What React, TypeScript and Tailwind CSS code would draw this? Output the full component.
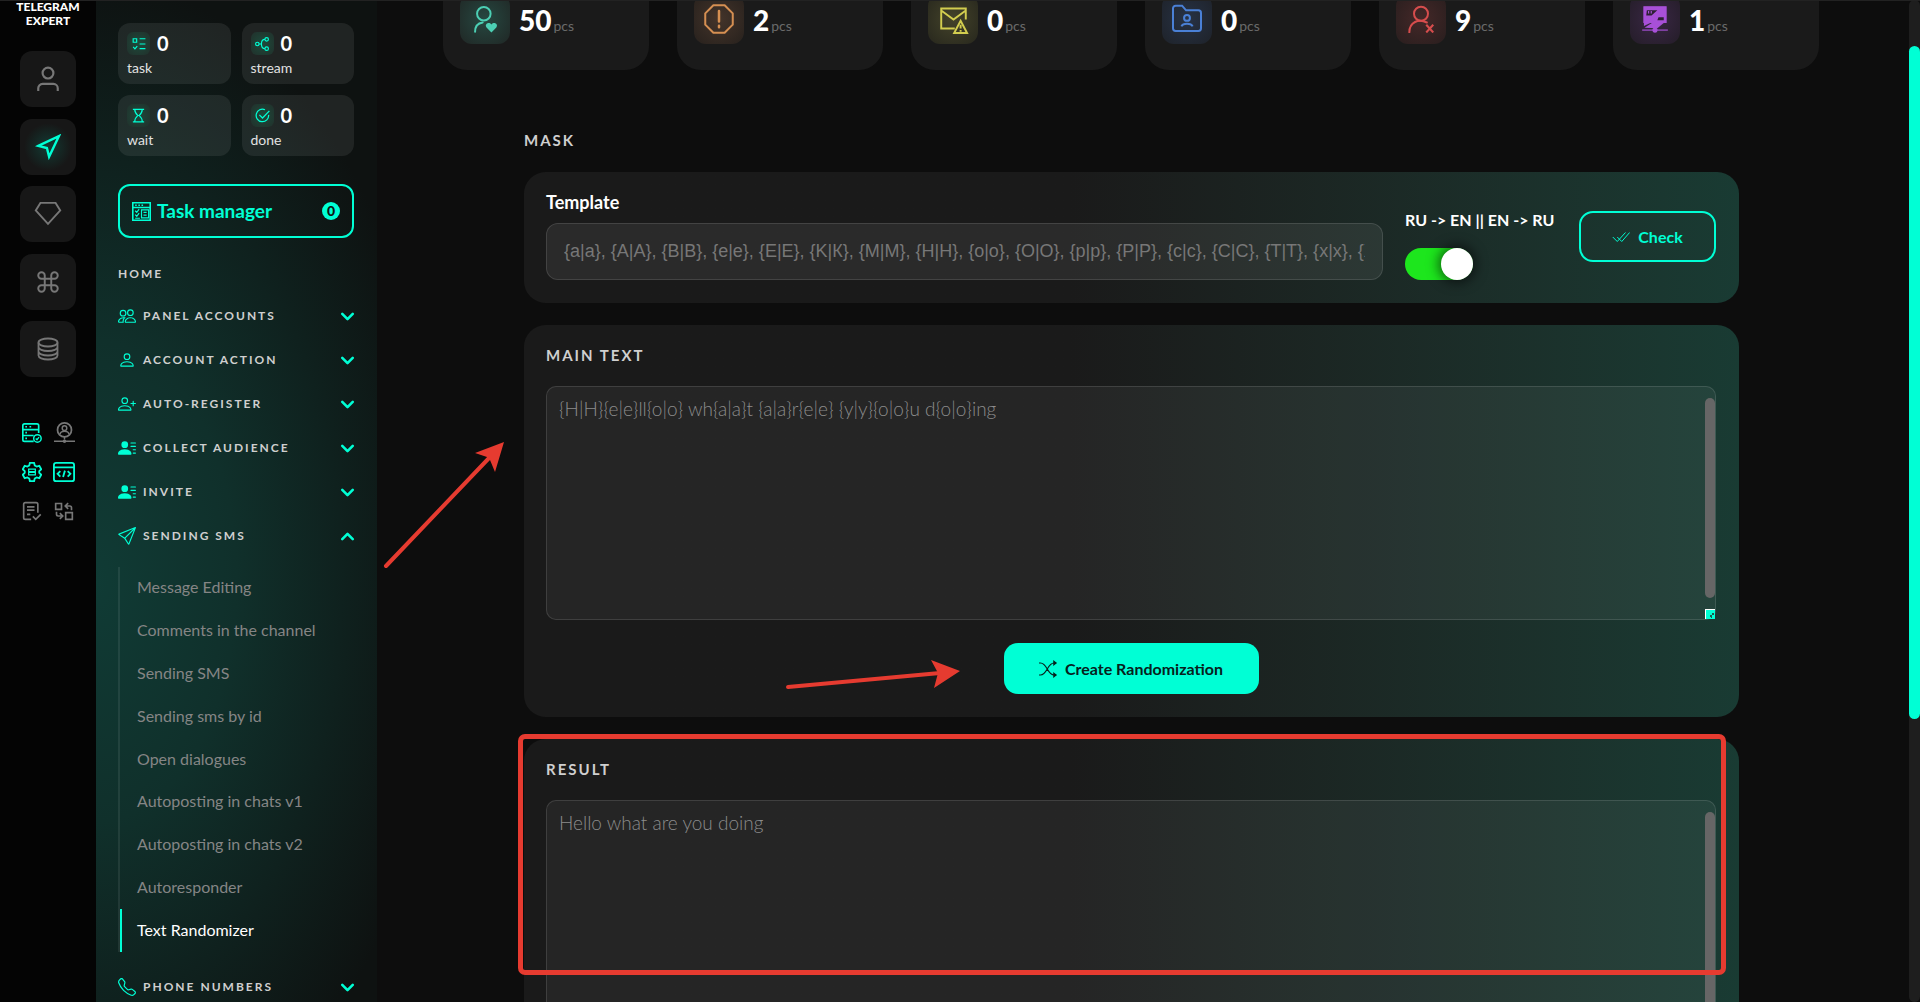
import type { ReactNode } from 'react';
import {
  BsPeople,
  BsPerson,
  BsPersonPlus,
  BsPersonLinesFill,
  BsSend,
  BsTelephone,
} from 'react-icons/bs';
import { ChevronDown, ChevronUp, Command, Navigation } from 'lucide-react';

const TEMPLATE =
  '{a|а}, {A|А}, {B|В}, {e|е}, {E|Е}, {K|К}, {M|М}, {H|Н}, {o|о}, {O|О}, {p|р}, {P|Р}, {c|с}, {C|С}, {T|Т}, {x|х}, {X|Х}, {y|у}';

function Svg({ size = 18, children }: { size?: number; children: ReactNode }) {
  return (
    <svg
      width={size}
      height={size}
      viewBox="0 0 24 24"
      fill="none"
      stroke="currentColor"
      strokeWidth={2}
      aria-hidden="true"
      className="shrink-0"
    >
      {children}
    </svg>
  );
}

const stats = [
  {
    value: 50,
    tile: 'bg-[radial-gradient(circle,#264841,#202725)] text-[#4ccfb4]',
    icon: (
      <Svg size={28}>
        <ellipse cx={11} cy={7.500} rx={5.800} ry={5.800} strokeWidth={1.700} />
        <path d="M3.500 23c0-5 3-7.500 6.500-8" strokeWidth={1.700} strokeLinecap="round" />
        <path
          d="M17.500 23.500l-4.200-4.300c-2-2.500 1.700-5.400 4.200-2.500 2.500-2.900 6.200 0 4.200 2.500z"
          fill="currentColor"
          stroke="none"
        />
      </Svg>
    ),
  },
  {
    value: 2,
    tile: 'bg-[radial-gradient(circle,#44342a,#27211d)] text-[#d58f52]',
    icon: (
      <Svg size={30}>
        <path d="M7.500 1h9L23 7.500v9L16.500 23h-9L1 16.500v-9z" strokeWidth={1.600} strokeLinejoin="round" />
        <path d="M12 5.500v8.500M12 17.300v1.200" strokeWidth={2} strokeLinecap="round" />
      </Svg>
    ),
  },
  {
    value: 0,
    tile: 'bg-[radial-gradient(circle,#44432a,#27271d)] text-[#d2cd4f]',
    icon: (
      <Svg size={31}>
        <path d="M13 19H2.500V3.500h19V12M2.500 5l9.500 7 9.500-7" strokeWidth={1.500} />
        <path d="M17.500 13l5 9.500h-10z" strokeWidth={1.500} />
        <path d="M17.500 16v3M17.500 20.200v1.300" strokeWidth={1.500} />
      </Svg>
    ),
  },
  {
    value: 0,
    tile: 'bg-[radial-gradient(circle,#273245,#1e2229)] text-[#4a80d6]',
    icon: (
      <Svg size={32}>
        <path
          d="M1.500 4a2 2 0 0 1 2-2h4.800L11.300 5.500H20.500a2 2 0 0 1 2 2V19a2 2 0 0 1-2 2H3.500a2 2 0 0 1-2-2z"
          strokeWidth={1.500}
        />
        <circle cx={12} cy={11.200} r={2.200} strokeWidth={1.500} />
        <path d="M7.800 17.500c1.200-2.600 7.200-2.600 8.400 0" strokeWidth={1.500} />
      </Svg>
    ),
  },
  {
    value: 9,
    tile: 'bg-[radial-gradient(circle,#452828,#281e1e)] text-[#d64d4d]',
    icon: (
      <Svg size={28}>
        <circle cx={12} cy={7.500} r={6} strokeWidth={1.700} />
        <path d="M2 23.500c0-9 8-12 15-8.500" strokeWidth={1.700} strokeLinecap="round" />
        <path d="M16.500 17l6 6.500M22.500 17l-6 6.500" strokeWidth={1.800} />
      </Svg>
    ),
  },
  {
    value: 1,
    tile: 'bg-[radial-gradient(circle,#3a2745,#241d28)] text-[#a850d8]',
    icon: (
      <Svg size={28}>
        <path d="M2.500 1.500h19V15H2.500z" fill="currentColor" strokeWidth={1} />
        <path d="M5 4.500h9l-5 4.500H4.500z M15 10.500h4.500v2.500H14z" fill="#2d2034" stroke="none" />
        <path d="M6.500 5.200v2M8.800 5.200v2" strokeWidth={1} />
        <path d="M2.500 14v4L12 13.500" fill="currentColor" stroke="none" />
        <path d="M3 19.500L10 15h10l-6 5z" fill="currentColor" stroke="none" />
        <path d="M1 21.500h22" strokeWidth={1} />
        <circle cx={12} cy={21.500} r={2.200} fill="currentColor" stroke="none" />
      </Svg>
    ),
  },
];

const counters = [
  {
    label: 'task',
    icon: (
      <Svg size={14}>
        <path d="M2 3h6v6H2zM13 3h10M13 12h10M13 20h10M2 17l3 3.500 4-5" />
      </Svg>
    ),
  },
  {
    label: 'stream',
    icon: (
      <Svg size={14}>
        <circle cx={4} cy={12} r={3} />
        <circle cx={20} cy={4} r={3} />
        <circle cx={20} cy={20} r={3} />
        <path d="M7 12h4M17 4c-5 0-6 3-6 8s1 8 6 8" />
      </Svg>
    ),
  },
  {
    label: 'wait',
    icon: (
      <Svg size={15}>
        <path d="M3 2h18M3 22h18M6 2c0 6 2 7.500 5 10-3 2.500-5 4-5 10M18 2c0 6-2 7.500-5 10 3 2.500 5 4 5 10" />
      </Svg>
    ),
  },
  {
    label: 'done',
    icon: (
      <Svg size={15}>
        <path d="M16 2.800A10 10 0 1 0 21.800 11M7 11l5 5L23 4.500" />
      </Svg>
    ),
  },
];

const railButtons = [
  {
    label: 'Account',
    active: false,
    icon: (
      <Svg size={26}>
        <circle cx={12} cy={6.500} r={5} />
        <path d="M3 23v-2.500a4 4 0 0 1 4-4h10a4 4 0 0 1 4 4V23" />
      </Svg>
    ),
  },
  { label: 'Telegram', active: true, icon: <Navigation size={26} strokeWidth={2.2} strokeLinejoin="miter" /> },
  {
    label: 'Premium',
    active: false,
    icon: (
      <Svg size={28}>
        <path d="M5.500 2.500h13L22.500 9 12 20.500 1.500 9z" strokeWidth={1.600} />
      </Svg>
    ),
  },
  { label: 'Commands', active: false, icon: <Command size={26} strokeWidth={1.8} /> },
  {
    label: 'Database',
    active: false,
    icon: (
      <Svg size={24}>
        <ellipse cx={12} cy={5.500} rx={9.500} ry={4} strokeWidth={1.800} />
        <path
          d="M2.500 5.500v13c0 2.200 4.200 4 9.500 4s9.500-1.800 9.500-4v-13M2.500 10c0 2.200 4.200 4 9.500 4s9.500-1.800 9.500-4M2.500 14.500c0 2.200 4.200 4 9.500 4s9.500-1.800 9.500-4"
          strokeWidth={1.800}
        />
      </Svg>
    ),
  },
];

const tools = [
  {
    label: 'Servers',
    on: true,
    icon: (
      <Svg size={20}>
        <path d="M14 22H3a2 2 0 0 1-2-2V3a2 2 0 0 1 2-2h15a2 2 0 0 1 2 2v9M1 8h19M1 15h13M4 4.500h2M9 4.500h2M4 11.500h2M4 18.500h2" />
        <circle cx={18.500} cy={18.500} r={4.500} strokeWidth={1.800} />
        <path d="M16.500 18.500l1.500 1.500 2.500-3" strokeWidth={1.600} />
      </Svg>
    ),
  },
  {
    label: 'Proxy',
    on: false,
    icon: (
      <Svg size={21}>
        <circle cx={12} cy={9} r={8} />
        <circle cx={12} cy={7} r={2.600} strokeWidth={1.700} />
        <path d="M7 14c.5-4.500 9.500-4.500 10 0M12 17v3M0 22h24" strokeWidth={1.700} />
        <circle cx={12} cy={22} r={2} fill="currentColor" stroke="none" />
      </Svg>
    ),
  },
  {
    label: 'Settings',
    on: true,
    icon: (
      <Svg size={20}>
        <path
          d="M9.500 1h5l.8 3.200 2.200 1.300 3.200-1 2.400 4.200-2.400 2.300v2l2.400 2.300-2.400 4.200-3.200-1-2.200 1.300-.8 3.200h-5l-.8-3.200-2.200-1.300-3.200 1-2.400-4.200 2.400-2.300v-2L.9 8.700l2.400-4.200 3.200 1 2.200-1.300z"
          strokeLinejoin="round"
          strokeWidth={2.200}
        />
        <path d="M8 8.500h8v3H8zM8 12.500h8v3H8z" strokeWidth={1.500} />
      </Svg>
    ),
  },
  {
    label: 'Code',
    on: true,
    icon: (
      <Svg size={22}>
        <rect x={1} y={2} width={22} height={20} rx={2.500} />
        <path d="M1 7h22M8 11l-3 3 3 3M16 11l3 3-3 3M13 10.500L11 17.500" />
      </Svg>
    ),
  },
  {
    label: 'Logs',
    on: false,
    icon: (
      <Svg size={20}>
        <path d="M11 22H4a2 2 0 0 1-2-2V4a2 2 0 0 1 2-2h13a2 2 0 0 1 2 2v10M6 7h9M6 11h9M6 16h4M13 18.500l3.500 3.500 6-6" />
      </Svg>
    ),
  },
  {
    label: 'Convert',
    on: false,
    icon: (
      <Svg size={20}>
        <path d="M2 3h7v7H2zM14 14h8v8h-8zM14 6h5a2 2 0 0 1 2 2v3M17 2.500L13.500 6 17 9.500M3 13v3a2 2 0 0 0 2 2h4M7 14.500l3.500 3.500L7 21.500" />
      </Svg>
    ),
  },
];

const menu = [
  { label: 'PANEL ACCOUNTS', icon: <BsPeople size={18} /> },
  { label: 'ACCOUNT ACTION', icon: <BsPerson size={18} /> },
  { label: 'AUTO-REGISTER', icon: <BsPersonPlus size={18} /> },
  { label: 'COLLECT AUDIENCE', icon: <BsPersonLinesFill size={18} /> },
  { label: 'INVITE', icon: <BsPersonLinesFill size={18} /> },
  { label: 'SENDING SMS', icon: <BsSend size={18} />, open: true },
];

const submenu = [
  'Message Editing',
  'Comments in the channel',
  'Sending SMS',
  'Sending sms by id',
  'Open dialogues',
  'Autoposting in chats v1',
  'Autoposting in chats v2',
  'Autoresponder',
  'Text Randomizer',
];

function Rail() {
  return (
    <nav className="flex w-24 shrink-0 flex-col items-center bg-[#040404]">
      <p className="text-center text-xs leading-[14px] font-black text-white">
        TELEGRAM
        <br />
        EXPERT
      </p>
      <div className="mt-[23px] flex h-[326px] shrink-0 flex-col justify-between">
        {railButtons.map((item) => (
          <button
            key={item.label}
            type="button"
            aria-label={item.label}
            className={
              item.active
                ? 'flex size-14 items-center justify-center rounded-xl bg-[radial-gradient(circle,#123a33,#171717_60%)] text-[#00ffd5]'
                : 'flex size-14 items-center justify-center rounded-xl bg-[#171717] text-[#777]'
            }
          >
            {item.icon}
          </button>
        ))}
      </div>
      <div className="mt-9 grid grid-cols-2">
        {tools.map((tool) => (
          <button
            key={tool.label}
            type="button"
            aria-label={tool.label}
            className={
              tool.on
                ? 'flex h-[39px] w-8 items-center justify-center text-[#00ffd5]'
                : 'flex h-[39px] w-8 items-center justify-center text-[#777]'
            }
          >
            {tool.icon}
          </button>
        ))}
      </div>
    </nav>
  );
}

function MenuButton({ label, icon, open }: { label: string; icon: ReactNode; open?: boolean }) {
  const Chevron = open ? ChevronUp : ChevronDown;

  return (
    <button
      type="button"
      className="flex h-11 w-full shrink-0 items-center text-left text-xs font-bold tracking-[2px] text-[#cfcfcf]"
    >
      <span className="mr-[7px] text-[#00ffd5]">{icon}</span>
      <span className="flex-1">{label}</span>
      <Chevron size={21} strokeWidth={3} className="-mr-1 text-[#00ffd5]" />
    </button>
  );
}

function Sidebar() {
  return (
    <aside className="flex w-[281px] shrink-0 flex-col bg-[#0e1211] bg-[radial-gradient(ellipse_125%_60%_at_0%_58%,#103b35_0%,#10302b_40%,#0e1211_100%)] pt-[23px] pr-[23px] pl-[22px]">
      <div className="grid grid-cols-2 gap-[11px]">
        {counters.map((counter) => (
          <div key={counter.label} className="h-[61px] rounded-xl bg-white/8 px-[9px] pt-[9px]">
            <div className="flex items-center gap-[7px]">
              <span className="flex size-[23px] items-center justify-center rounded-md bg-[radial-gradient(circle,#1d4a3b,#21302b)] text-[#00ffd5]">
                {counter.icon}
              </span>
              <span className="text-xl leading-[23px] font-bold text-white">0</span>
            </div>
            <p className="mt-[3px] text-sm leading-5 text-[#e2e2e2]">{counter.label}</p>
          </div>
        ))}
      </div>

      <button
        type="button"
        className="mt-7 flex h-[54px] shrink-0 items-center rounded-xl border-2 border-[#00ffd5] px-3 text-[19px] font-bold text-[#00ffd5]"
      >
        <Svg size={19}>
          <path d="M1 1h22v22H1zM1 7h22M4 4h2M8 4h2M12 4h2" />
          <path d="M4 11l2 2 3-4M4 16l2 2 3-4M12 10h9v10h-9zM14.500 13h4M14.500 16.500h4M4 20.500h6" strokeWidth={1.500} />
        </Svg>
        <span className="ml-1.5 flex-1 text-left">Task manager</span>
        <span className="flex size-[18px] items-center justify-center rounded-full bg-[#00ffd5] text-sm font-black text-[#0e1513]">
          0
        </span>
      </button>

      <h2 className="mt-[26px] text-xs leading-5 font-bold tracking-[2px] text-[#cfcfcf]">HOME</h2>
      <div className="mt-[10px] flex flex-col">
        {menu.map((item) => (
          <MenuButton key={item.label} {...item} />
        ))}
      </div>

      <ul className="mt-[9px] flex h-[385px] shrink-0 flex-col border-l-2 border-white/8">
        {submenu.map((item) => (
          <li key={item} className="flex flex-1">
            <a
              href="#"
              className={
                item === 'Text Randomizer'
                  ? 'flex flex-1 items-center border-l-2 border-[#00ffd5] pb-0.5 pl-[15px] text-base text-white'
                  : 'flex flex-1 items-center pb-0.5 pl-[17px] text-base text-[#858585]'
              }
            >
              {item}
            </a>
          </li>
        ))}
      </ul>
      <div className="mt-[13px] flex flex-col">
        <MenuButton label="PHONE NUMBERS" icon={<BsTelephone size={18} />} />
      </div>
    </aside>
  );
}

function StatCards() {
  return (
    <div className="-mt-6 grid w-full grid-cols-6 gap-7 pr-[90px] pl-[66px]">
      {stats.map((stat, i) => (
        <div key={i} className="flex h-[94px] items-start rounded-3xl bg-[#1a1a1a] px-[17px] pt-[18px]">
          <span className={`flex size-[50px] shrink-0 items-center justify-center rounded-xl ${stat.tile}`}>
            {stat.icon}
          </span>
          <span className="ml-[9px] flex items-baseline gap-0.5 leading-[52px]">
            <strong className="text-[28px] font-black text-white">{stat.value}</strong>
            <span className="text-sm leading-5 text-[#6a6a6a]">pcs</span>
          </span>
        </div>
      ))}
    </div>
  );
}

const panelClass = 'rounded-[22px] bg-linear-to-r from-[#1a1a1a] from-45% to-[#193b33] pr-[23px] pl-[22px]';
const headingClass = 'block text-[15px] leading-5 font-bold tracking-[2px] text-[#cfcfcf]';

function ResultArea({ id, text }: { id: string; text: string }) {
  return (
    <div className="relative">
      <textarea
        id={id}
        placeholder={text}
        className="block h-[234px] w-full resize-none overflow-hidden rounded-[10px] border border-white/12 bg-white/5 px-3 py-[10px] text-[19px] leading-6 font-light text-white outline-none placeholder:text-[#8c8c8c]"
      />
      <span className="absolute top-3 right-px h-[200px] w-2.5 rounded-full bg-[#666]" />
      <span className="absolute right-px bottom-px flex size-2.5 items-end justify-end border-t border-l border-white bg-[#00ffd5]">
        <svg width={7} height={7} viewBox="0 0 7 7" fill="#1c5a4c" aria-hidden="true">
          <path d="M4 1h2v2H4zM2 3h2v2H2zM3 5h1v1H3z" />
        </svg>
      </span>
    </div>
  );
}

function Main() {
  return (
    <main className="relative flex min-w-0 flex-1 flex-col">
      <StatCards />
      <div className="w-full pr-[170px] pl-[147px]">
        <h2 className={`mt-[60px] ${headingClass}`}>MASK</h2>

        <section className={`mt-[22px] flex h-[131px] items-start gap-[22px] pt-5 ${panelClass}`}>
          <div className="flex min-w-0 flex-1 flex-col">
            <label htmlFor="template" className="mb-[11px] text-lg leading-5 font-bold text-white">
              Template
            </label>
            <input
              id="template"
              type="text"
              placeholder={TEMPLATE}
              className="h-[57px] rounded-xl border border-white/12 bg-white/7 px-[17px] font-['Liberation_Sans',sans-serif] text-lg text-white outline-none placeholder:text-[#777]"
            />
          </div>
          <label className="mt-[18px] flex w-[152px] shrink-0 cursor-pointer flex-col gap-[18px] text-base leading-5 font-bold whitespace-nowrap text-white">
            RU -&gt; EN || EN -&gt; RU
            <input type="checkbox" role="switch" defaultChecked className="sr-only" />
            <span className="flex h-8 w-[68px] justify-end rounded-full bg-[#1de61d]">
              <span className="size-8 rounded-full bg-white shadow-[0_0_12px_3px_rgba(0,0,0,0.55)]" />
            </span>
          </label>
          <button
            type="button"
            className="mt-[19px] flex h-[51px] w-[137px] shrink-0 items-center justify-center gap-2 rounded-[14px] border-2 border-[#00ffd5] text-base font-bold text-[#00ffd5]"
          >
            <Svg size={18}>
              <path d="M1 12l6 6L18 6M7 12l6 6L23.500 6" strokeWidth={1.300} />
            </Svg>
            Check
          </button>
        </section>

        <section className={`mt-[22px] pt-5 pb-[23px] ${panelClass}`}>
          <label htmlFor="main-text" className={`mb-[21px] ${headingClass}`}>
            MAIN TEXT
          </label>
          <ResultArea id="main-text" text="{H|Н}{e|е}ll{o|о} wh{a|а}t {a|а}r{e|е} {y|у}{o|о}u d{o|о}ing" />
          <button
            type="button"
            className="mx-auto mt-[23px] flex h-[51px] w-[255px] items-center justify-center gap-2 rounded-[14px] bg-[#00ffd5] text-base font-bold text-[#07211c]"
          >
            <Svg size={18}>
              <path
                d="M0 4h2c9 0 9 16 18 16h3M0 20h2c9 0 9-16 18-16h3"
                strokeWidth={1.500}
              />
              <path d="M19 0l5 4-5 4zM19 16l5 4-5 4z" fill="currentColor" stroke="none" />
            </Svg>
            Create Randomization
          </button>
        </section>

        <section className={`mt-[22px] pt-5 pb-[23px] ${panelClass}`}>
          <label htmlFor="result" className={`mb-[21px] ${headingClass}`}>
            RESULT
          </label>
          <ResultArea id="result" text="Hello what are you doing" />
        </section>
      </div>

      <div className="pointer-events-none absolute top-[734px] right-[183px] left-[141px] h-[241px] rounded-[7px] border-5 border-[#e63b30]" />
      <svg
        width={590}
        height={260}
        viewBox="380 435 590 260"
        fill="#e63b30"
        stroke="#e63b30"
        strokeLinecap="round"
        aria-hidden="true"
        className="pointer-events-none absolute top-[435px] left-[3px]"
      >
        <path d="M386 566L490 457" strokeWidth={4} />
        <path d="M504 442L475 453L487 457L490 460L495 472Z" stroke="none" />
        <path d="M788 687L940 673" strokeWidth={4} />
        <path d="M960 671L931 660L938 673L934 688Z" stroke="none" />
      </svg>
    </main>
  );
}

export default function App() {
  return (
    <div className="relative flex h-screen overflow-hidden bg-[#0d0d0d] font-[Lato,sans-serif]">
      <Rail />
      <Sidebar />
      <Main />
      <div className="w-[11px] shrink-0 rounded-full bg-[#1e1e1e] pt-[46px]">
        <div className="h-[673px] rounded-full bg-[#00ffd5]" />
      </div>
      <div className="absolute inset-x-0 top-0 h-px bg-[#222]" />
    </div>
  );
}
